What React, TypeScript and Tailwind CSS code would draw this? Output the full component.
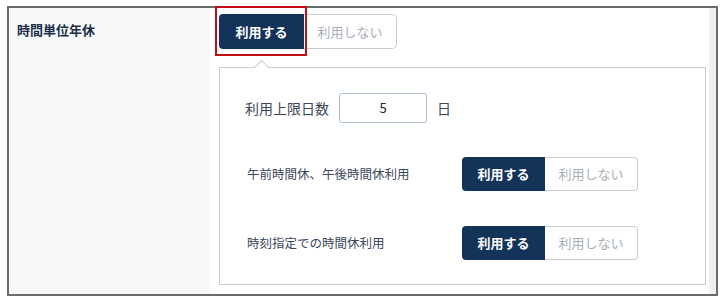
import React from 'react';

const font = { fontFamily: '"Noto Sans CJK JP", "Noto Sans", sans-serif' };

function Toggle({ on }: { on: boolean }) {
  return (
    <div className="flex h-[34px] text-[13px]">
      <div
        className={`flex w-[83px] items-center justify-center rounded-l-[4px] font-bold ${
          on ? 'bg-[#143359] text-white' : 'border border-[#c9ced4] text-[#a9afb6]'
        }`}
      >
        利用する
      </div>
      <div
        className={`flex w-[93px] items-center justify-center rounded-r-[4px] ${
          on ? 'border border-l-0 border-[#c9ced4] text-[#a9afb6]' : 'bg-[#143359] font-bold text-white'
        }`}
      >
        利用しない
      </div>
    </div>
  );
}

export default function App() {
  return (
    <div className="h-[301px] w-[727px] bg-white pl-[7px] pt-[6px]" style={font}>
      <div className="flex h-[290px] w-[711px] border-2 border-[#6b6b6b]">
        <div className="w-[201px] bg-[#f7f8fa] pl-[8px] pt-[12px]">
          <span className="block text-[13px] leading-[20px] font-bold text-[#1d2f48]">時間単位年休</span>
        </div>

        <div className="flex-1 bg-white pl-[9px] pt-[6px]">
          <div className="relative flex h-[35px] text-[13px]">
            <div className="flex w-[85px] items-center justify-center rounded-l-[4px] bg-[#143359] font-bold text-white">
              利用する
            </div>
            <div className="flex w-[93px] items-center justify-center rounded-r-[5px] border border-l-0 border-[#c9ced4] text-[#a9afb6]">
              利用しない
            </div>
            <div className="pointer-events-none absolute -top-[8px] -left-[4px] h-[50px] w-[92px] border-[2.5px] border-[#c40d12]" />
          </div>

          <div className="relative mt-[18px] w-[487px] border border-[#c9ced4] px-[25px] pt-[25px] pb-[24px]">
            <div className="absolute -top-[6px] left-[36px] h-[11px] w-[11px] rotate-45 border-t border-l border-[#c9ced4] bg-white" />
            <div className="flex items-center text-[14px] text-[#3a4659]">
              <span>利用上限日数</span>
              <div className="ml-[10px] flex h-[30px] w-[88px] items-center justify-center rounded-[3px] border border-[#aebfd2] text-[13px] text-[#222]">
                5
              </div>
              <span className="ml-[10px]">日</span>
            </div>

            <div className="mt-[34px] flex items-center">
              <span className="w-[217px] pl-[2px] text-[12.5px] text-[#3a4659]">午前時間休、午後時間休利用</span>
              <Toggle on />
            </div>

            <div className="mt-[35px] flex items-center">
              <span className="w-[217px] pl-[2px] text-[12.5px] text-[#3a4659]">時刻指定での時間休利用</span>
              <Toggle on />
            </div>
          </div>
        </div>

        <div className="w-[7px] bg-[#f0f0f0]" />
      </div>
    </div>
  );
}
